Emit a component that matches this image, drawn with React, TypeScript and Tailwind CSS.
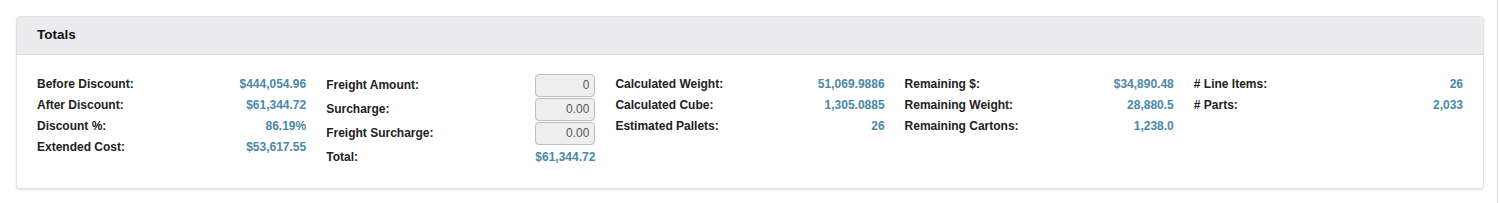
import React from 'react';

const summary = [
  { label: 'Before Discount:', value: '$444,054.96' },
  { label: 'After Discount:', value: '$61,344.72' },
  { label: 'Discount %:', value: '86.19%' },
  { label: 'Extended Cost:', value: '$53,617.55' },
];

const freight = [
  { label: 'Freight Amount:', value: '0' },
  { label: 'Surcharge:', value: '0.00' },
  { label: 'Freight Surcharge:', value: '0.00' },
];

const weights = [
  { label: 'Calculated Weight:', value: '51,069.9886' },
  { label: 'Calculated Cube:', value: '1,305.0885' },
  { label: 'Estimated Pallets:', value: '26' },
];

const remaining = [
  { label: 'Remaining $:', value: '$34,890.48' },
  { label: 'Remaining Weight:', value: '28,880.5' },
  { label: 'Remaining Cartons:', value: '1,238.0' },
];

const counts = [
  { label: '# Line Items:', value: '26' },
  { label: '# Parts:', value: '2,033' },
];

const Column: React.FC<{ rows: { label: string; value: string }[] }> = ({ rows }) => (
  <div className="flex flex-col">
    {rows.map((r) => (
      <div key={r.label} className="flex justify-between items-center h-[21px]">
        <span className="font-bold text-[#222]">{r.label}</span>
        <span className="font-bold text-[#4a89a9]">{r.value}</span>
      </div>
    ))}
  </div>
);

const App: React.FC = () => {
  return (
    <div
      className="flex w-full h-[203px] bg-white text-[12px]"
      style={{ fontFamily: '"Liberation Sans", Arial, sans-serif' }}
    >
      <div className="flex-1 pl-4 pt-4 pr-[13px]">
        <div className="bg-white border border-[#e2e2e2] rounded-[4px] shadow-[0_1px_2px_rgba(0,0,0,0.12)]">
          <div className="bg-[#ececef] border-b border-[#dcdcdc] rounded-t-[4px] h-[38px] flex items-center px-5">
            <h3 className="font-bold text-[13.5px] text-[#111]">Totals</h3>
          </div>
          <div className="grid grid-cols-5 gap-x-5 px-5 pt-[18px] pb-[19px]">
            <Column rows={summary} />
            <div className="flex flex-col">
              {freight.map((f) => (
                <div key={f.label} className="flex justify-between items-center h-[24px]">
                  <span className="font-bold text-[#222]">{f.label}</span>
                  <input
                    type="text"
                    disabled
                    value={f.value}
                    readOnly
                    className="w-[60px] h-[23px] px-[5px] text-right text-[12px] text-[#555] bg-[#eeeeee] border border-[#bdbdbd] rounded-[4px]"
                  />
                </div>
              ))}
              <div className="flex justify-between items-center h-[24px]">
                <span className="font-bold text-[#222]">Total:</span>
                <span className="font-bold text-[#4a89a9]">$61,344.72</span>
              </div>
            </div>
            <Column rows={weights} />
            <Column rows={remaining} />
            <Column rows={counts} />
          </div>
        </div>
      </div>
      <div className="w-px bg-[#dddddd]" />
      <div className="w-[2px]" />
    </div>
  );
};

export default App;
